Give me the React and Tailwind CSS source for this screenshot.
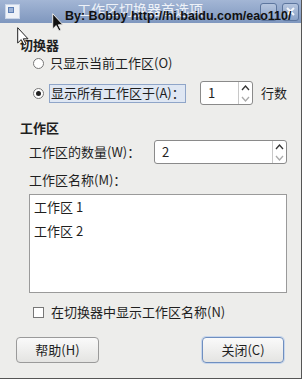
import React from 'react';

const font = { fontFamily: '"Noto Sans CJK SC", "Noto Sans", sans-serif' };

function Spin({ value, className }) {
  return (
    <div className={`flex h-[24px] shrink-0 items-stretch rounded-[3px] border border-[#8a8a8a] bg-white ${className}`}>
      <div className="flex flex-1 items-center pl-[7px] text-[13px] text-[#222]">{value}</div>
      <div className="flex w-[14px] flex-col border-l border-[#c8c8c8]">
        <div className="flex flex-1 items-center justify-center text-[#333]">
          <svg width="9" height="6" viewBox="0 0 9 6"><path d="M1 5 L4.5 1 L8 5" fill="none" stroke="currentColor" strokeWidth="1.3" /></svg>
        </div>
        <div className="flex flex-1 items-center justify-center text-[#aaa]">
          <svg width="9" height="6" viewBox="0 0 9 6"><path d="M1 1 L4.5 5 L8 1" fill="none" stroke="currentColor" strokeWidth="1.3" /></svg>
        </div>
      </div>
    </div>
  );
}

function Radio({ checked }) {
  return (
    <div className="flex h-[11px] w-[11px] shrink-0 items-center justify-center rounded-full border border-[#777] bg-white">
      {checked && <div className="h-[5px] w-[5px] rounded-full bg-[#222]" />}
    </div>
  );
}

function Cursor({ className, fill, stroke }) {
  return (
    <svg className={`absolute ${className}`} width="12" height="19" viewBox="0 0 12 19">
      <path d="M0.7 0.7 L0.7 16 L4.2 12.6 L7 18 L9 17 L6.3 11.8 L11 11.8 Z" fill={fill} stroke={stroke} strokeWidth="1" strokeLinejoin="round" />
    </svg>
  );
}

export default function App() {
  return (
    <div className="relative h-[381px] w-[305px] overflow-hidden whitespace-nowrap bg-white text-[#1f1f1f]" style={font}>
      <div className="flex h-[379px] w-[302px] flex-col border-r border-b border-[#555] bg-[#ededeb]">
        {/* title bar */}
        <div className="relative flex h-[23px] shrink-0 items-center bg-gradient-to-b from-[#a3b6d5] to-[#7f97be] pl-[5px] pr-[2px]">
          <div className="relative h-[15px] w-[15px] border border-[#c9d5e8] bg-[#eef2f8]">
            <div className="absolute left-[2px] top-[2px] h-[6px] w-[6px] border border-[#5d7fb5] bg-[#9db3d6]" />
          </div>
          <div className="mb-[6px] flex-1 text-center text-[14px] leading-none text-[#eef2f8]">工作区切换器首选项</div>
          <div className="flex gap-[5px]">
            <div className="h-[18px] w-[17px] rounded-[3px] border border-[#5d769e] bg-gradient-to-b from-[#b5c5de] to-[#8ba2c6]" />
            <div className="flex h-[18px] w-[17px] items-center justify-center rounded-[3px] border border-[#5d769e] bg-gradient-to-b from-[#b5c5de] to-[#8ba2c6] text-[#f4f6fa]">
              <svg width="9" height="9" viewBox="0 0 9 9"><path d="M1 1 L8 8 M8 1 L1 8" stroke="currentColor" strokeWidth="2" /></svg>
            </div>
          </div>
          <div className="absolute left-[65px] top-[10px] text-[12.5px] font-bold leading-none text-[#111]" style={{ fontFamily: '"Liberation Sans", sans-serif' }}>
            By: Bobby http://hi.baidu.com/eao110/
          </div>
        </div>

        <div className="flex flex-1 flex-col px-[20px] pt-[13px] text-[13px]">
          <div className="font-bold leading-[18px]">切换器</div>
          <div className="flex flex-col pl-[13px]">
            <div className="flex h-[18px] items-center gap-[6px]">
              <Radio />
              <span>只显示当前工作区(O)</span>
            </div>
            <div className="mt-[9px] flex h-[24px] items-center">
              <Radio checked />
              <span className="ml-[5px] flex h-[19px] w-[137px] shrink-0 items-center border border-[#8fa5c8] bg-[#dfe7f3] px-[1px]">显示所有工作区于(A)：</span>
              <Spin value="1" className="ml-[14px] w-[53px]" />
              <span className="ml-[8px]">行数</span>
            </div>
          </div>

          <div className="mt-[14px] font-bold leading-[18px]">工作区</div>
          <div className="flex flex-col pl-[9px]">
            <div className="mt-[3px] flex h-[24px] items-center">
              <span className="w-[125px] shrink-0">工作区的数量(W)：</span>
              <Spin value="2" className="w-[133px]" />
            </div>
            <div className="mt-[6px] leading-[20px]">工作区名称(M)：</div>
            <div className="mt-[4px] h-[99px] w-[258px] border border-[#9a9a9a] bg-white px-[4px] leading-[24px]">
              <div>工作区 1</div>
              <div>工作区 2</div>
            </div>
            <div className="mt-[10px] flex h-[18px] items-center gap-[7px] pl-[4px]">
              <div className="h-[11px] w-[11px] shrink-0 border border-[#777] bg-white" />
              <span>在切换器中显示工作区名称(N)</span>
            </div>
          </div>

          <div className="mt-[16px] flex justify-between">
            <button className="-ml-[4px] h-[26px] w-[83px] rounded-[4px] border border-[#9a9a9a] bg-gradient-to-b from-[#fafafa] to-[#e4e4e2] text-[13px]">帮助(H)</button>
            <button className="-mr-[3px] h-[26px] w-[82px] rounded-[4px] border border-[#6f8fc0] bg-gradient-to-b from-[#fafafa] to-[#e4e4e2] text-[13px] shadow-[0_0_0_1px_#c7d6ec]">关闭(C)</button>
          </div>
        </div>
      </div>

      {/* cursors */}
      <Cursor className="left-[52px] top-[13px]" fill="#111" stroke="#e8e8e8" />
      <Cursor className="left-[17px] top-[27px]" fill="#fff" stroke="#222" />
    </div>
  );
}
